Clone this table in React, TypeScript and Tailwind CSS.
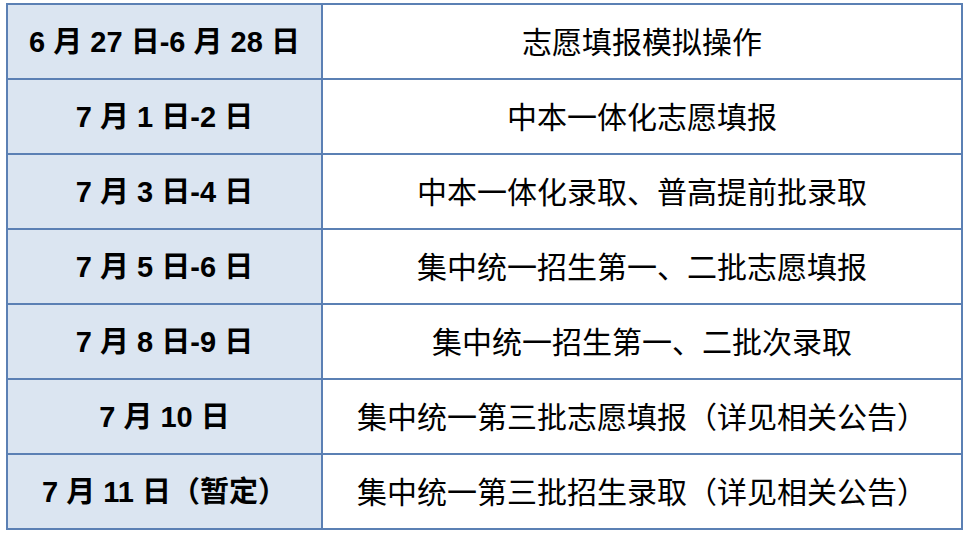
const rows: [string, string][] = [
  ["6 月 27 日-6 月 28 日", "志愿填报模拟操作"],
  ["7 月 1 日-2 日", "中本一体化志愿填报"],
  ["7 月 3 日-4 日", "中本一体化录取、普高提前批录取"],
  ["7 月 5 日-6 日", "集中统一招生第一、二批志愿填报"],
  ["7 月 8 日-9 日", "集中统一招生第一、二批次录取"],
  ["7 月 10 日", "集中统一第三批志愿填报（详见相关公告）"],
  ["7 月 11 日（暂定）", "集中统一第三批招生录取（详见相关公告）"],
];

export default function App() {
  return (
    <div className="w-[970px] h-[539px] bg-white pt-[3px] pl-[6px]">
      <table className="border-collapse w-[957px] text-black">
        <tbody>
          {rows.map(([date, task]) => (
            <tr key={date} className="h-[75px]">
              <td className="w-[315px] border-2 border-[#5b80b4] bg-[#dbe5f1] text-center text-[29px] font-bold font-['Liberation_Sans','Noto_Sans_CJK_SC',sans-serif] leading-none pt-[2px]">
                {date}
              </td>
              <td className="border-2 border-[#5b80b4] text-center text-[30px] font-['Noto_Sans_CJK_SC',sans-serif] leading-none pb-[4px]">
                {task}
              </td>
            </tr>
          ))}
        </tbody>
      </table>
    </div>
  );
}
